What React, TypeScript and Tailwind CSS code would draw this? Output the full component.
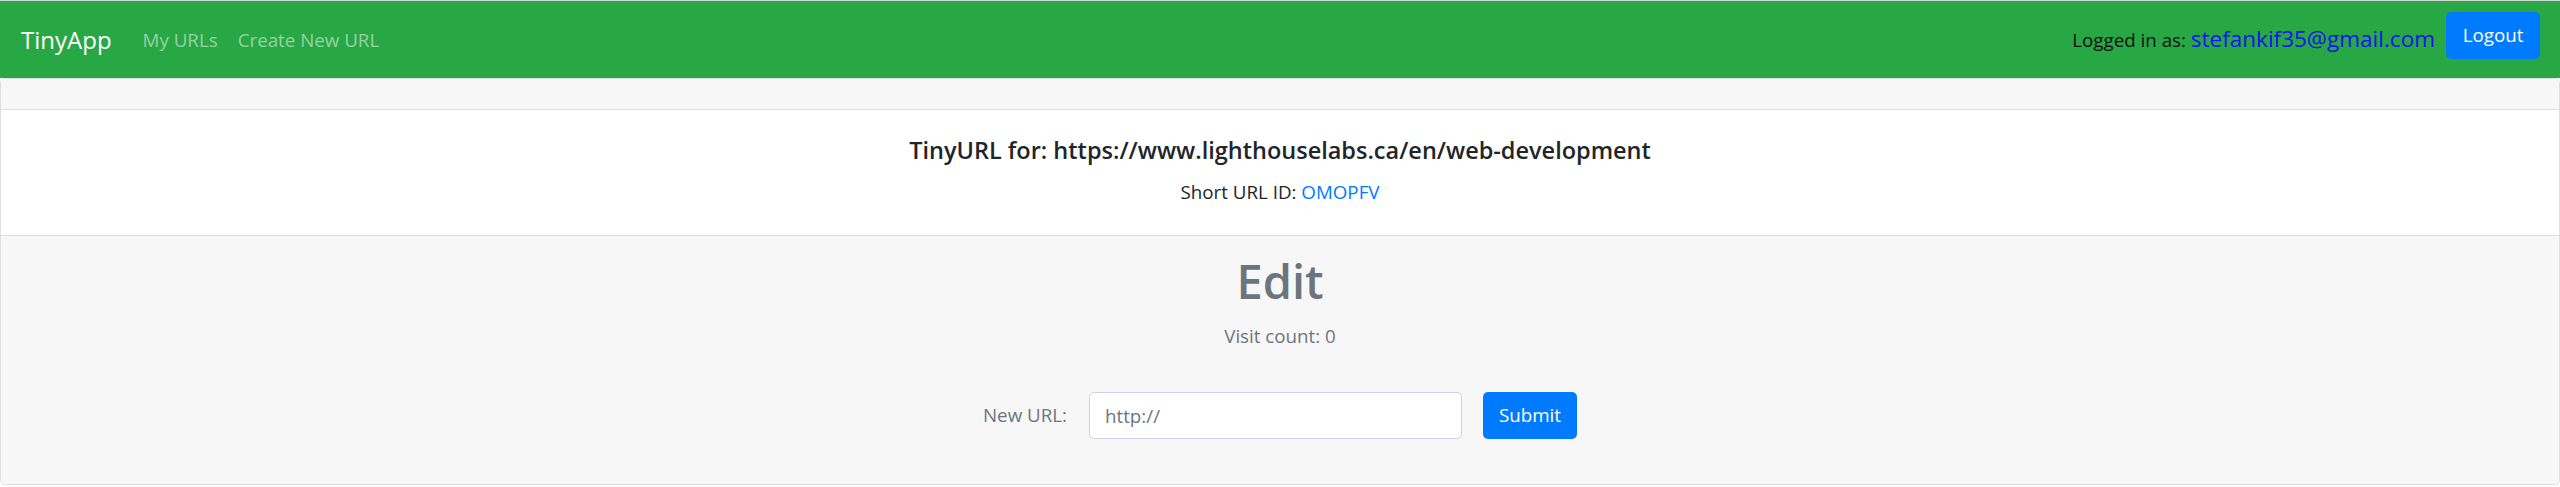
import React from "react";

export default function App() {
  return (
    <div className="w-full bg-white font-['Open_Sans','Noto_Sans',sans-serif] text-[#212529]">
      <div className="border-t border-[#d6d6d6]">
        <nav className="h-[77px] bg-[#28a745] flex items-center justify-between pl-[21px] pr-[20px]">
          <div className="flex items-center">
            <span className="text-[24px] leading-[30px] text-white mr-[21px]">TinyApp</span>
            <a className="text-[18.75px] leading-[30px] text-[rgba(255,255,255,0.5)] px-[10px]">My URLs</a>
            <a className="text-[18.75px] leading-[30px] text-[rgba(255,255,255,0.5)] px-[10px]">Create New URL</a>
          </div>
          <div className="flex items-center">
            <span className="text-[18.75px] leading-[30px] text-[#111]">
              Logged in as: <span className="text-[22.5px] text-[#1212f2]">stefankif35@gmail.com</span>
            </span>
            <button className="ml-[11px] mb-[8px] w-[94px] h-[47px] rounded-[5px] bg-[#007bff] text-white text-[18.75px]">
              Logout
            </button>
          </div>
        </nav>
      </div>
      <div className="border border-[#dfdfdf] rounded-[5px]">
        <div className="h-[31px] bg-[#f7f7f7] border-b border-[#dfdfdf] rounded-t-[5px]" />
        <div className="h-[125px] bg-white flex flex-col items-center pt-[25px]">
          <h5 className="text-[23.5px] leading-[30px] font-semibold">
            TinyURL for: https://www.lighthouselabs.ca/en/web-development
          </h5>
          <p className="mt-[12px] text-[18.75px] leading-[30px]">
            Short URL ID: <a className="text-[#007bff]">OMOPFV</a>
          </p>
        </div>
        <div className="h-[249px] bg-[#f7f7f7] border-t border-[#dfdfdf] rounded-b-[5px] flex flex-col items-center pt-[15px]">
          <h1 className="text-[47px] leading-[60px] font-semibold text-[#6c757d]">Edit</h1>
          <p className="mt-[10px] text-[18.75px] leading-[30px] text-[#6c757d]">Visit count: 0</p>
          <form className="mt-[41px] flex items-center" onSubmit={(e) => e.preventDefault()}>
            <label className="text-[18.75px] text-[#6c757d] mr-[22px]">New URL:</label>
            <input
              className="w-[373px] h-[47px] bg-white border border-[#ced4da] rounded-[5px] px-[15px] text-[18.75px] placeholder:text-[#6c757d] outline-none"
              placeholder="http://"
            />
            <button className="ml-[21px] w-[94px] h-[47px] rounded-[5px] bg-[#007bff] text-white text-[18.75px]">
              Submit
            </button>
          </form>
        </div>
      </div>
    </div>
  );
}
